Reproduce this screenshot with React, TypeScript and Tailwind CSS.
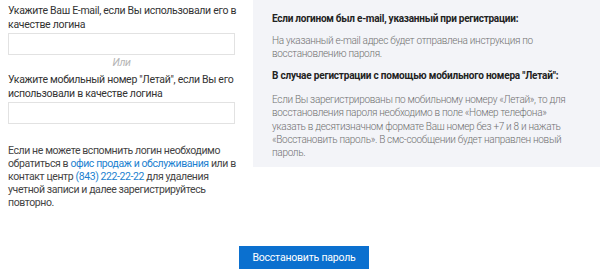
export default function App() {
  return (
    <div className="w-[600px] h-[270px] bg-white overflow-hidden text-[10.5px] font-['Roboto',sans-serif]">
      <div className="flex h-[246px]">
        <div className="w-[227px] ml-[8px] pt-[4px] text-[#333] tracking-[-0.3px]">
          <p className="leading-[13.5px] w-[230px]">Укажите Ваш E-mail, если Вы использовали его в качестве логина</p>
          <input className="block w-full h-[22px] mt-[2px] border border-[#e2e2e2] bg-white" />
          <p className="text-center italic text-[#b5b5b5] leading-[12px] mt-[2px]">Или</p>
          <p className="leading-[13.5px] mt-[4px] w-[230px]">Укажите мобильный номер "Летай", если Вы его использовали в качестве логина</p>
          <input className="block w-full h-[22px] mt-[2px] border border-[#e2e2e2] bg-white" />
          <p className="leading-[13px] mt-[20px] text-[#444] tracking-[-0.4px] w-[230px]">
            Если не можете вспомнить логин необходимо обратиться в{" "}
            <span className="text-[#1b7fd0]">офис продаж и обслуживания</span> или в контакт центр{" "}
            <span className="text-[#1b7fd0]">(843) 222-22-22</span> для удаления учетной записи и далее зарегистрируйтесь повторно.
          </p>
        </div>
        <div className="flex-1 ml-[18px] h-[167px] bg-[#f3f4f8] pl-[19px] pr-[21px] pt-[12px]">
          <p className="font-bold text-[#222] text-[10px] tracking-[-0.25px] leading-[14px]">Если логином был e-mail, указанный при регистрации:</p>
          <p className="font-light text-[#707070] text-[10px] tracking-[-0.3px] leading-[13px] mt-[8px]">На указанный e-mail адрес будет отправлена инструкция по восстановлению пароля.</p>
          <p className="font-bold text-[#222] text-[10px] tracking-[-0.2px] leading-[14px] mt-[9px]">В случае регистрации с помощью мобильного номера "Летай":</p>
          <p className="font-light text-[#707070] text-[10px] tracking-[-0.3px] leading-[13.3px] mt-[10px]">Если Вы зарегистрированы по мобильному номеру «Летай», то для восстановления пароля необходимо в поле «Номер телефона» указать в десятизначном формате Ваш номер без +7 и 8 и нажать «Восстановить пароль». В смс-сообщении будет направлен новый пароль.</p>
        </div>
      </div>
      <div className="flex justify-center pl-[8px]">
        <button className="w-[130px] h-[23px] bg-[#0b70cf] text-white text-[10.5px] leading-[23px] tracking-[-0.2px]">Восстановить пароль</button>
      </div>
    </div>
  );
}
